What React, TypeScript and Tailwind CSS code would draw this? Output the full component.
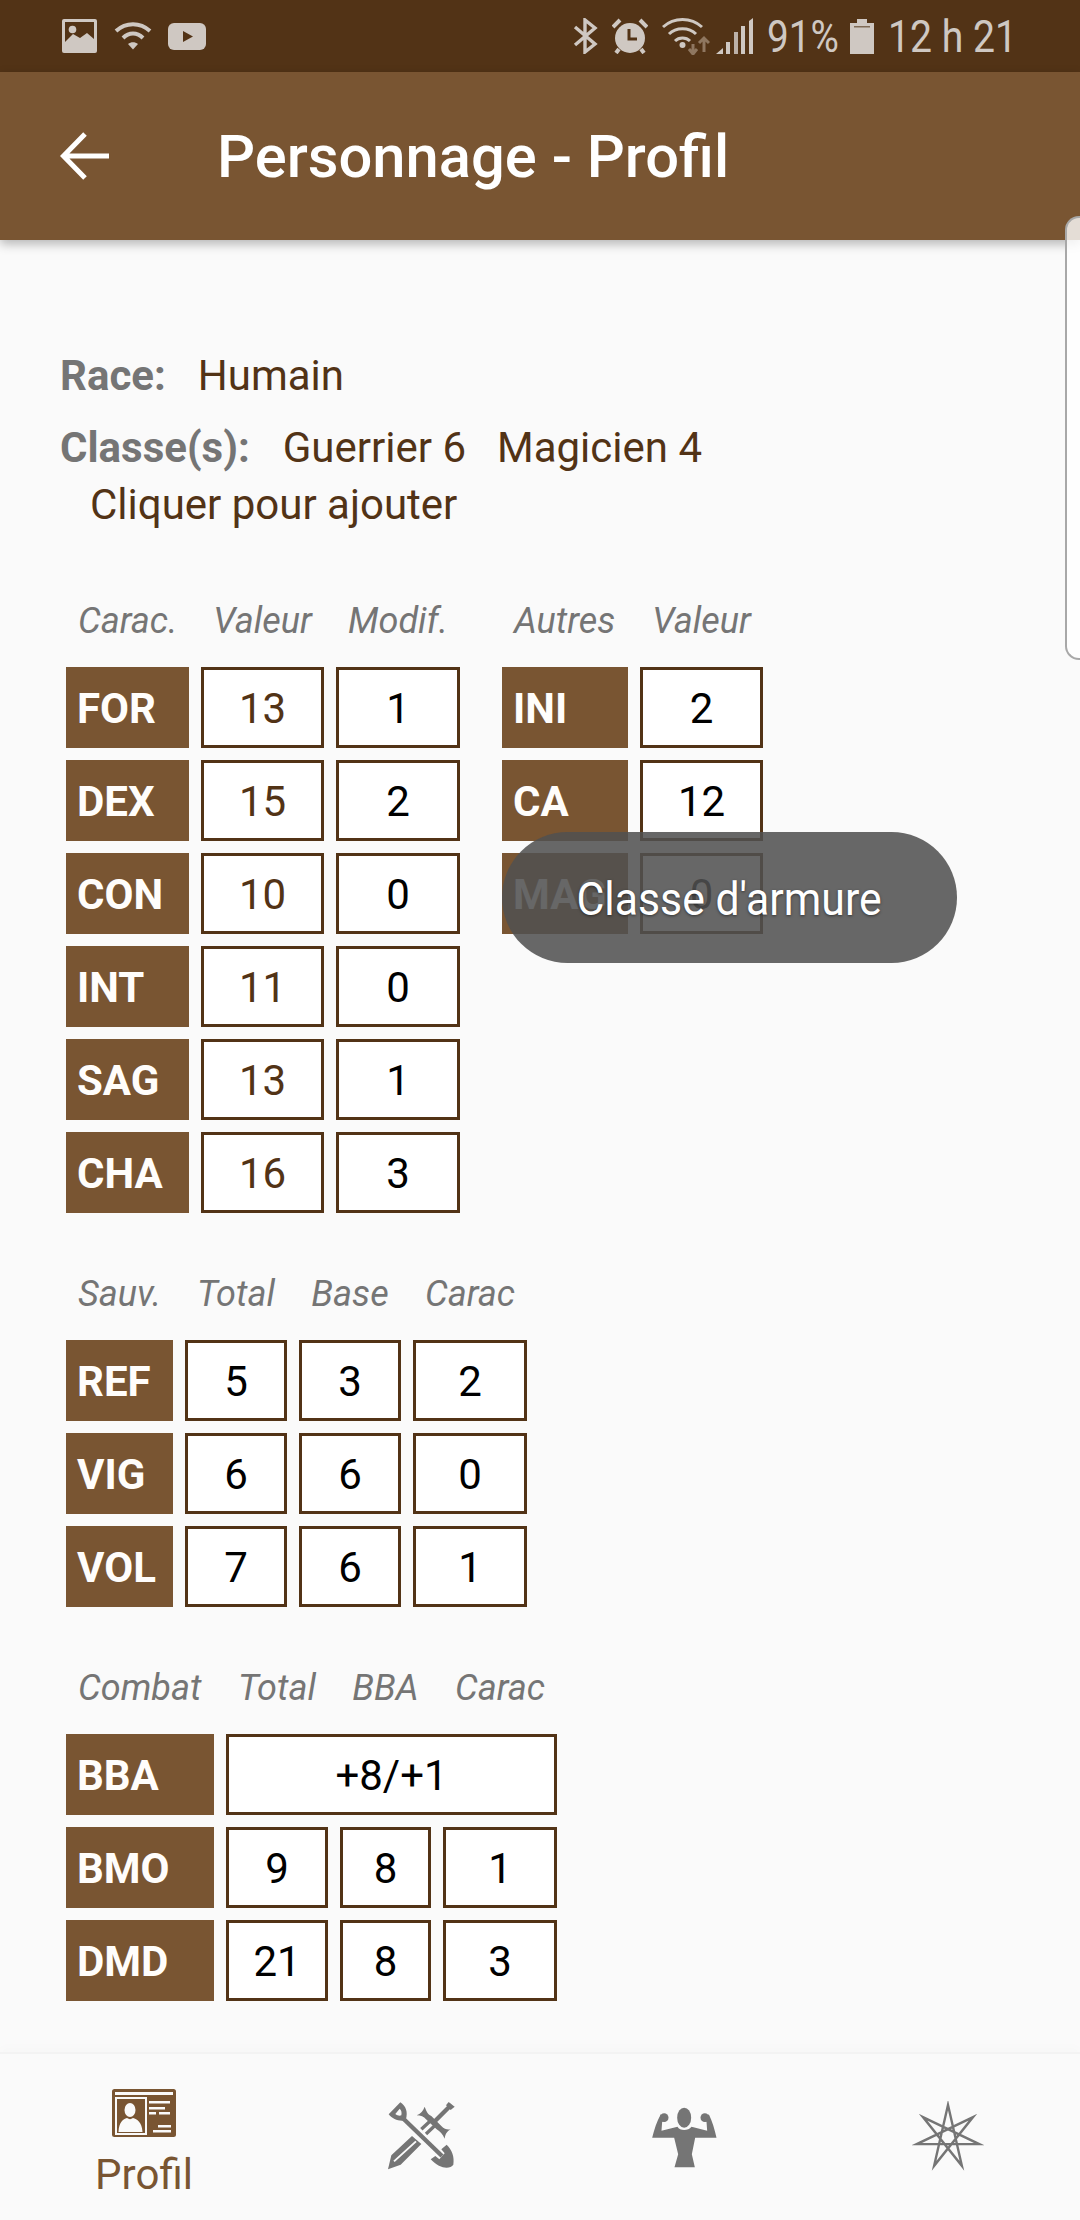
const brown = "bg-[#795532]";

type Val = { v: string; dark?: boolean };

function Header({ names, widths }: { names: string[]; widths: number[] }) {
  return (
    <div className="flex h-[40px] gap-3 text-[36px] leading-[42px] text-[#757575] italic">
      {names.map((n, i) => (
        <div key={n} className={i === 0 ? "pl-3 whitespace-nowrap" : "text-center whitespace-nowrap"} style={{ width: widths[i] }}>
          {n}
        </div>
      ))}
    </div>
  );
}

function Label({ text, width }: { text: string; width: number }) {
  return (
    <div className={`flex h-[81px] items-center pt-[2px] pl-[11px] text-[42px] font-bold text-[#fffdfb] ${brown}`} style={{ width }}>
      {text}
    </div>
  );
}

function Cell({ text, width, dark }: { text: string; width: number; dark?: boolean }) {
  return (
    <div
      className={`flex h-[81px] items-center justify-center border-[3px] border-[#523316] bg-white pt-[1px] text-[42px] ${dark ? "text-[#523316]" : "text-black"}`}
      style={{ width }}
    >
      {text}
    </div>
  );
}

function Table({ names, widths, rows }: { names: string[]; widths: number[]; rows: { label: string; vals: Val[] }[] }) {
  return (
    <div>
      <Header names={names} widths={widths} />
      <div className="mt-[27px] flex flex-col gap-3">
        {rows.map((r) => (
          <div key={r.label} className="flex gap-3">
            <Label text={r.label} width={widths[0]} />
            {r.vals.map((c, i) => (
              <Cell key={i} text={c.v} width={widths[i + 1]} dark={c.dark} />
            ))}
          </div>
        ))}
      </div>
    </div>
  );
}

function StatusLeft() {
  return (
    <div className="flex items-center">
      <svg width="35" height="34" viewBox="0 0 35 34" className="ml-[62px]">
        <rect x="0" y="0" width="35" height="34" rx="2" fill="#cfc8c2" />
        <rect x="3" y="3" width="29" height="25" fill="#523316" />
        <circle cx="10.5" cy="10.5" r="3.8" fill="#cfc8c2" />
        <path d="M3 23 L11 15 L18 19 L25 14 L32 20 V31 H3 Z" fill="#cfc8c2" />
      </svg>
      <svg width="38" height="28" viewBox="0 0 38 28" className="ml-[17px]" fill="none" stroke="#cfc8c2" strokeWidth="4">
        <path d="M2 9 C12 0 26 0 36 9" />
        <path d="M9 16 C15 10 23 10 29 16" />
        <path d="M14 22 L19 27.5 L24 22 C21 19.5 17 19.5 14 22 Z" fill="#cfc8c2" stroke="none" />
      </svg>
      <svg width="38" height="27" viewBox="0 0 38 27" className="ml-[16px]">
        <rect width="38" height="27" rx="6" fill="#cfc8c2" />
        <path d="M15 8 L25 13.5 L15 19 Z" fill="#523316" />
      </svg>
    </div>
  );
}

function StatusRight() {
  return (
    <div className="flex items-center">
      <svg width="25" height="36" viewBox="0 0 25 36" fill="none" stroke="#cfc8c2" strokeWidth="3.4">
        <path d="M2 9 L22 26 L12 34 V2 L22 10 L2 27" />
      </svg>
      <svg width="36" height="36" viewBox="0 0 36 36" className="ml-[14px]">
        <circle cx="18" cy="20" r="15" fill="#cfc8c2" />
        <path d="M1 9 L8 2 M35 9 L28 2 M7 31 L4 35 M29 31 L32 35" stroke="#cfc8c2" strokeWidth="4" />
        <path d="M17 11 V21 H25" fill="none" stroke="#523316" strokeWidth="3" />
      </svg>
      <svg width="48" height="37" viewBox="0 0 48 37" className="ml-[14px]" fill="none" stroke="#cfc8c2" strokeWidth="3">
        <path d="M1 9 C12 -1 29 -1 40 9" />
        <path d="M7 16 C14 9 27 9 34 16" />
        <path d="M13 23 C17 19 24 19 28 23" />
        <circle cx="20.5" cy="27" r="3" fill="#cfc8c2" stroke="none" />
        <path d="M31 36 V26 M27 31 L31 36 L35 31" stroke="#8f7760" />
        <path d="M42 34 V20 M37 25 L42 20 L47 25" stroke="#8f7760" />
      </svg>
      <svg width="37" height="36" viewBox="0 0 37 36" className="ml-[6px]" fill="#cfc8c2">
        <path d="M0 36 L7 30 V36 Z" />
        <rect x="10" y="24" width="4" height="12" />
        <rect x="18" y="14" width="4" height="22" opacity=".85" />
        <rect x="25" y="8" width="4" height="28" />
        <path d="M33 3 L37 0 V36 H33 Z" />
      </svg>
      <span className="ml-[14px] inline-block w-[70px] origin-left scale-x-[0.86] text-[45px] leading-none whitespace-nowrap text-[#cfc8c2]">91%</span>
      <svg width="24" height="35" viewBox="0 0 24 35" className="ml-[13px]">
        <path d="M0 4 H7 V0 H17 V4 H24 V35 H0 Z" fill="#cfc8c2" />
        <rect x="4" y="7" width="16" height="1.5" fill="#7f6a55" />
      </svg>
      <span className="ml-[14px] inline-block w-[122px] origin-left scale-x-[0.87] text-[45px] leading-none whitespace-nowrap text-[#cfc8c2]">12 h 21</span>
    </div>
  );
}

function IdCardIcon() {
  return (
    <svg width="64" height="48" viewBox="0 0 64 48">
      <rect width="64" height="48" rx="2.5" fill="#795532" />
      <rect x="3" y="3" width="58" height="3" fill="#fafafa" />
      <rect x="4" y="9" width="30" height="36" fill="none" stroke="#fafafa" strokeWidth="2" />
      <ellipse cx="18" cy="21" rx="5.5" ry="7" fill="#fafafa" />
      <path d="M6.5 43 C7 33 11 30 15 29 C17 30.5 19 30.5 21 29 C25 30 30 33 30.5 43 Z" fill="#fafafa" />
      <rect x="37" y="12" width="21" height="2.5" fill="#fafafa" />
      <rect x="37" y="18" width="16" height="2.5" fill="#fafafa" />
      <rect x="37" y="23" width="7" height="2.5" fill="#fafafa" />
      <rect x="47" y="23" width="11" height="2.5" fill="#fafafa" />
      <rect x="46" y="36" width="13" height="2.5" fill="#fafafa" />
      <rect x="41" y="41" width="18" height="2.5" fill="#fafafa" />
    </svg>
  );
}

function ToolsIcon() {
  return (
    <svg width="100" height="80" viewBox="0 0 300 240" fill="none" className="mb-[14px] ml-[12px]">
      {/* shovel */}
      <path fillRule="evenodd" fill="#757575" d="M38 73 L73 37 C90 48 96 66 90 88 L78 92 C62 92 48 85 38 73 Z M58 72 C64 77 71 78 76 76 C78 67 76 60 71 56 Z" />
      <path d="M80 84 L198 198" stroke="#757575" strokeWidth="13" />
      <path fill="#757575" d="M212 164 C228 180 236 200 232 224 C222 238 192 238 164 208 L178 198 L190 208 L206 190 L196 178 Z" />
      {/* sword */}
      <path d="M226 44 L172 98" stroke="#757575" strokeWidth="13" />
      <path d="M218 36 L236 50 L224 60 L210 46 Z" fill="#757575" />
      <path d="M146 50 C152 64 154 72 166 78 L196 108 C206 118 214 120 224 118 C214 124 208 130 206 146 C200 132 192 124 182 118 L150 88 C144 80 134 76 122 76 C134 72 142 62 146 50 Z" fill="#757575" />
      <path d="M136 118 L170 86 M150 132 L184 100" stroke="#757575" strokeWidth="10" />
      <path fillRule="evenodd" fill="#757575" d="M108 138 L136 162 L74 224 L36 238 L46 196 Z M118 152 L52 212 L56 216 L122 156 Z" />
    </svg>
  );
}

function MuscleIcon() {
  return (
    <svg width="74" height="65" viewBox="310 220 215 195" fill="#757575">
      <ellipse cx="418" cy="258" rx="21" ry="30" />
      <circle cx="358" cy="258" r="13" />
      <circle cx="480" cy="258" r="13" />
      <path d="M322 318 C328 295 336 268 348 248 L362 268 L352 270 L350 297 L398 285 C405 298 430 298 440 285 L487 297 L485 270 L476 268 L492 248 C502 268 510 295 515 318 L451 318 L441 368 L450 407 L389 407 L400 368 L388 318 Z" />
    </svg>
  );
}

function StarIcon() {
  const pts = Array.from({ length: 7 }, (_, i) => {
    const a = ((i * 3 * 360) / 7 - 90) * (Math.PI / 180);
    return `${(32 * Math.cos(a)).toFixed(2)},${(32 * Math.sin(a)).toFixed(2)}`;
  }).join(" ");
  return (
    <svg width="72" height="72" viewBox="-36 -36 72 72">
      <polygon points={pts} fill="none" stroke="#757575" strokeWidth="2.4" strokeLinejoin="miter" strokeMiterlimit="6" />
    </svg>
  );
}

export default function App() {
  const w1 = [123, 123, 124];
  const w2 = [126, 123];
  const w3 = [107, 102, 102, 114];
  const w4 = [148, 102, 91, 114];

  return (
    <div className="relative flex h-[2220px] w-[1080px] flex-col overflow-hidden bg-[#fafafa] font-['Roboto',sans-serif]">
      <div className="flex h-[72px] shrink-0 items-center justify-between bg-[#523316] pr-[70px]">
        <StatusLeft />
        <StatusRight />
      </div>

      <header className={`relative z-10 flex h-[168px] shrink-0 items-center shadow-[0_4px_10px_rgba(0,0,0,0.28)] ${brown}`}>
        <svg width="50" height="48" viewBox="0 0 50 48" className="ml-[60px]" fill="none" stroke="#fff" strokeWidth="5">
          <path d="M49 24 H4 M25 2 L3.5 24 L25 46" />
        </svg>
        <h1 className="ml-[107px] pt-[3px] text-[59.7px] font-medium text-white">Personnage - Profil</h1>
      </header>

      <main className="flex-1 px-[66px] pt-[107px]">
        <div className="text-[42px] leading-[58px] text-[#523316]">
          <div className="-ml-[6px] flex">
            <span className="font-bold text-[#757575]">Race:</span>
            <span className="ml-[32px]">Humain</span>
          </div>
          <div className="-ml-[6px] mt-[14px] flex">
            <span className="font-bold text-[#757575]">Classe(s):</span>
            <span className="ml-[33px]">Guerrier 6</span>
            <span className="ml-[31px]">Magicien 4</span>
          </div>
          <div className="-mt-px ml-[24px]">Cliquer pour ajouter</div>
        </div>

        <div className="mt-[66px] flex gap-[42px]">
          <Table
            names={["Carac.", "Valeur", "Modif."]}
            widths={w1}
            rows={[
              { label: "FOR", vals: [{ v: "13", dark: true }, { v: "1" }] },
              { label: "DEX", vals: [{ v: "15", dark: true }, { v: "2" }] },
              { label: "CON", vals: [{ v: "10", dark: true }, { v: "0" }] },
              { label: "INT", vals: [{ v: "11", dark: true }, { v: "0" }] },
              { label: "SAG", vals: [{ v: "13", dark: true }, { v: "1" }] },
              { label: "CHA", vals: [{ v: "16", dark: true }, { v: "3" }] },
            ]}
          />
          <Table
            names={["Autres", "Valeur"]}
            widths={w2}
            rows={[
              { label: "INI", vals: [{ v: "2" }] },
              { label: "CA", vals: [{ v: "12" }] },
              { label: "MAG", vals: [{ v: "0" }] },
            ]}
          />
        </div>

        <div className="mt-[60px]">
          <Table
            names={["Sauv.", "Total", "Base", "Carac"]}
            widths={w3}
            rows={[
              { label: "REF", vals: [{ v: "5" }, { v: "3" }, { v: "2" }] },
              { label: "VIG", vals: [{ v: "6" }, { v: "6" }, { v: "0" }] },
              { label: "VOL", vals: [{ v: "7" }, { v: "6" }, { v: "1" }] },
            ]}
          />
        </div>

        <div className="mt-[60px]">
          <Header names={["Combat", "Total", "BBA", "Carac"]} widths={w4} />
          <div className="mt-[27px] flex flex-col gap-3">
            <div className="flex gap-3">
              <Label text="BBA" width={w4[0]} />
              <Cell text="+8/+1" width={331} />
            </div>
            <div className="flex gap-3">
              <Label text="BMO" width={w4[0]} />
              <Cell text="9" width={w4[1]} />
              <Cell text="8" width={w4[2]} />
              <Cell text="1" width={w4[3]} />
            </div>
            <div className="flex gap-3">
              <Label text="DMD" width={w4[0]} />
              <Cell text="21" width={w4[1]} />
              <Cell text="8" width={w4[2]} />
              <Cell text="3" width={w4[3]} />
            </div>
          </div>
        </div>
      </main>

      <nav className="relative flex h-[168px] shrink-0 border-t-2 border-[#f3f3f3] bg-[#fafafa] shadow-[0_-6px_8px_rgba(0,0,0,0.012)]">
        <div className="flex w-[288px] flex-col items-center pt-[35px]">
          <IdCardIcon />
          <span className="mt-[15px] text-[42px] leading-[46px] text-[#795532]">Profil</span>
        </div>
        <div className="flex w-[264px] items-center justify-center">
          <ToolsIcon />
        </div>
        <div className="flex w-[264px] items-center justify-center">
          <MuscleIcon />
        </div>
        <div className="flex w-[264px] items-center justify-center">
          <StarIcon />
        </div>
      </nav>

      {/* edge panel handle */}
      <div className="absolute top-[216px] right-0 z-20 h-[444px] w-[15px] rounded-l-[14px] border-y-2 border-l-2 border-[#a8a8a8] bg-white/80" />

      {/* toast */}
      <div className="absolute top-[832px] left-[502px] z-30 flex h-[131px] w-[455px] items-center justify-center rounded-full bg-[rgba(80,80,80,0.87)] pt-[3px]">
        <span className="inline-block scale-x-[0.93] text-[46px] whitespace-nowrap text-white [text-shadow:0_1px_3px_rgba(0,0,0,0.5)]">Classe d'armure</span>
      </div>
    </div>
  );
}
